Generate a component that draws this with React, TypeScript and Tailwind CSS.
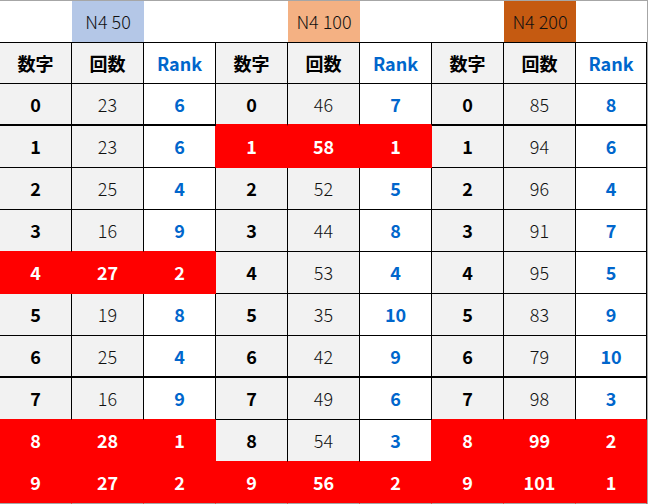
const groups = [
  {
    label: 'N4 50',
    labelBg: 'bg-[#b4c7e7]',
    counts: [23, 23, 25, 16, 27, 19, 25, 16, 28, 27],
    ranks: [6, 6, 4, 9, 2, 8, 4, 9, 1, 2],
    red: [4, 8, 9],
  },
  {
    label: 'N4 100',
    labelBg: 'bg-[#f4b183]',
    counts: [46, 58, 52, 44, 53, 35, 42, 49, 54, 56],
    ranks: [7, 1, 5, 8, 4, 10, 9, 6, 3, 2],
    red: [1, 9],
  },
  {
    label: 'N4 200',
    labelBg: 'bg-[#c55a11]',
    counts: [85, 94, 96, 91, 95, 83, 79, 98, 99, 101],
    ranks: [8, 6, 4, 7, 5, 9, 10, 3, 2, 1],
    red: [8, 9],
  },
];

const isRed = (r: number, c: number) => {
  if (r < 0 || r > 9 || c < 0 || c > 8) return false;
  return groups[Math.floor(c / 3)].red.includes(r);
};

function DataCell({ r, c }: { r: number; c: number }) {
  const g = groups[Math.floor(c / 3)];
  const kind = c % 3;
  const red = isRed(r, c);
  const text = kind === 0 ? r : kind === 1 ? g.counts[r] : g.ranks[r];

  // red fill covers the grid lines on its edges
  const rightRed = red || isRed(r, c + 1);
  const bottomRed = red || isRed(r + 1, c);

  let bg = kind === 2 ? 'bg-white' : 'bg-[#f2f2f2]';
  let color = kind === 0 ? 'text-black font-bold' : kind === 1 ? 'text-[#111] font-light' : 'text-[#0066cc] font-bold';
  if (red) {
    bg = 'bg-[#ff0000]';
    color = 'text-white font-bold';
  }

  const bWidth = r === 0 || r === 6 ? 'border-b-2' : 'border-b';
  const bColor = r === 9 ? 'border-b-[#a6a6a6]' : bottomRed ? 'border-b-[#ff0000]' : 'border-b-black';
  const rColor = rightRed ? 'border-r-[#ff0000]' : 'border-r-black';

  return (
    <div className={`h-[42px] flex items-center justify-center border-r ${bWidth} ${bColor} ${rColor} ${bg} ${color}`}>
      {text}
    </div>
  );
}

export default function App() {
  const heads = ['数字', '回数', 'Rank'];

  return (
    <div className="w-[648px] h-[504px] overflow-hidden bg-white border-t border-r border-[#a6a6a6] text-[18px] font-[Noto_Sans_CJK_JP,Noto_Sans,sans-serif]">
      <div className="grid grid-cols-[repeat(8,72px)_71px]">
        {/* Title row */}
        {Array.from({ length: 9 }).map((_, c) => {
          const g = groups[Math.floor(c / 3)];
          const isLabel = c % 3 === 1;
          return (
            <div
              key={`t${c}`}
              className={`h-[41px] flex items-center justify-center font-light text-[#111] ${isLabel ? g.labelBg : 'bg-white'}`}
            >
              {isLabel ? g.label : ''}
            </div>
          );
        })}

        {/* Column headers */}
        {Array.from({ length: 9 }).map((_, c) => {
          const kind = c % 3;
          return (
            <div
              key={`h${c}`}
              className={`h-[42px] flex items-center justify-center border-t border-b border-r border-black font-bold ${
                kind === 2 ? 'bg-white text-[#0066cc]' : 'bg-[#f2f2f2] text-black'
              }`}
            >
              {heads[kind]}
            </div>
          );
        })}

        {/* Data rows */}
        {Array.from({ length: 10 }).map((_, r) =>
          Array.from({ length: 9 }).map((_, c) => <DataCell key={`${r}-${c}`} r={r} c={c} />)
        )}
      </div>
    </div>
  );
}
